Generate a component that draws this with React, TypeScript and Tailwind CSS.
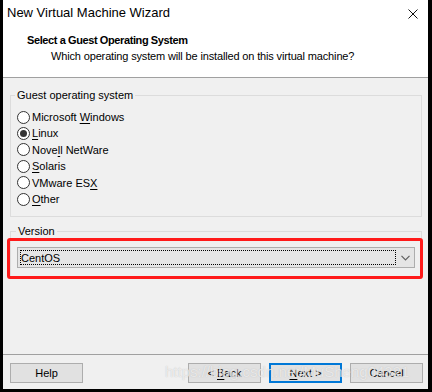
import React from 'react';

const uiFont = "font-['Liberation_Sans',Arial,sans-serif]";

// Letter with a mnemonic underline, the way Win32 dialogs draw it
const Mn = ({ text, at }: { text: string; at: number }) => (
  <>
    {text.slice(0, at)}
    <span className="underline underline-offset-[2px]">{text[at]}</span>
    {text.slice(at + 1)}
  </>
);

interface OsOption {
  label: string;
  key: number;
  checked?: boolean;
}

const osOptions: OsOption[] = [
  { label: 'Microsoft Windows', key: 10 },
  { label: 'Linux', key: 0, checked: true },
  { label: 'Novell NetWare', key: 4 },
  { label: 'Solaris', key: 0 },
  { label: 'VMware ESX', key: 9 },
  { label: 'Other', key: 0 },
];

const Radio = ({ checked }: { checked?: boolean }) => (
  <span className="w-[13px] h-[13px] rounded-full border border-[#333333] bg-white flex items-center justify-center shrink-0">
    {checked && <span className="w-[7px] h-[7px] rounded-full bg-[#333333]" />}
  </span>
);

const Button = ({ children, focused }: { children: React.ReactNode; focused?: boolean }) => (
  <button
    className={`w-[73px] h-[20px] flex items-center justify-center text-[11px] text-black bg-[#e1e1e1] ${
      focused ? 'border-2 border-[#0078d7]' : 'border border-[#adadad]'
    }`}
  >
    <span className="whitespace-pre">{children}</span>
  </button>
);

export default function App() {
  return (
    <div className={`w-[432px] h-[392px] bg-black pl-[3px] pr-[4px] pb-[3px] flex ${uiFont}`}>
      <div className="flex-1 flex flex-col bg-[#f0f0f0]">
        {/* Title bar */}
        <div className="h-[26px] shrink-0 bg-white flex items-center justify-between pl-[4px] pr-[10px]">
          <span className="text-[13px] text-black">New Virtual Machine Wizard</span>
          <svg width="10" height="10" viewBox="0 0 10 10" className="mt-[2px]">
            <path d="M0.5 0.5 L9.5 9.5 M9.5 0.5 L0.5 9.5" stroke="#111" strokeWidth="1" />
          </svg>
        </div>

        {/* Header */}
        <div className="h-[52px] shrink-0 bg-white pl-[24px] pt-[6px] border-b border-[#a0a0a0]">
          <div className="text-[11px] font-bold tracking-[-0.4px] text-black leading-[16px]">
            Select a Guest Operating System
          </div>
          <div className="text-[11px] tracking-[-0.15px] text-black leading-[16px] pl-[24px]">
            Which operating system will be installed on this virtual machine?
          </div>
        </div>

        {/* Body */}
        <div className="flex-1 flex flex-col pl-[7px] pr-[6px] pt-[9px]">
          <fieldset className="border border-[#dcdcdc] pl-[6px] pt-[6px] pb-[9px]">
            <legend className="text-[11px] leading-[16px] px-[2px] ml-[-2px] text-black">Guest operating system</legend>
            {osOptions.map((o) => (
              <div key={o.label} className="h-[16.4px] flex items-center gap-[2px] text-[11px] text-black">
                <Radio checked={o.checked} />
                <span>
                  <Mn text={o.label} at={o.key} />
                </span>
              </div>
            ))}
          </fieldset>

          <div className="relative mt-[6px]">
            <fieldset className="border border-[#dcdcdc] pl-[6px] pr-[6px] pt-[8px] pb-[10px]">
              <legend className="text-[11px] leading-[16px] px-[2px] ml-[-1px] text-black">Version</legend>
              <div className="h-[21px] bg-[#e5e5e5] border border-[#adadad] flex items-center pl-[2px]">
                <div className="flex-1 h-[15px] border border-dotted border-black flex items-center text-[11px] text-black">
                  CentOS
                </div>
                <div className="w-[18px] flex items-center justify-center">
                  <svg width="9" height="6" viewBox="0 0 9 6">
                    <path d="M0.5 0.8 L4.5 4.8 L8.5 0.8" stroke="#606060" strokeWidth="1.2" fill="none" />
                  </svg>
                </div>
              </div>
            </fieldset>
            {/* annotation box drawn over the screenshot */}
            <div className="absolute left-[-3px] right-[-1px] top-[15px] h-[41px] border-[3px] border-[#ff1a1a] rounded-[3px]" />
          </div>
        </div>

        {/* Footer */}
        <div className="relative h-[35px] shrink-0 border-t border-[#a0a0a0] flex items-start pt-[8px] pl-[7px] pr-[5px]">
          <Button>Help</Button>
          <div className="flex-1" />
          <div className="flex gap-[8px]">
            <Button>
              {'< '}
              <Mn text="Back" at={0} />
            </Button>
            <Button focused>
              <Mn text="Next" at={0} />
              {' >'}
            </Button>
            <Button>Cancel</Button>
          </div>
          <span className="absolute left-[162px] top-[8px] text-[15px] leading-[18px] text-white/65 font-['Liberation_Sans',sans-serif] [text-shadow:0_0_1px_rgba(150,150,150,0.6)] pointer-events-none">
            https://blog.csdn.net/MuSheng04321
          </span>
        </div>
      </div>
    </div>
  );
}
